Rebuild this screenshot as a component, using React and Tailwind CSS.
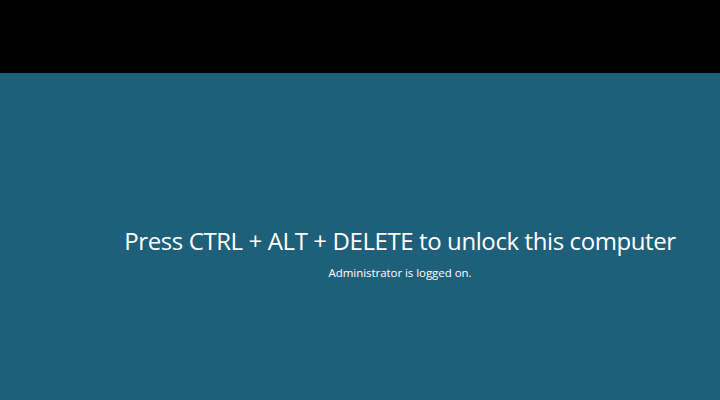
export default function App() {
  return (
    <div className="flex h-[400px] w-[720px] flex-col overflow-hidden bg-[#1e5f79] font-['Open_Sans',sans-serif] text-white">
      <div className="h-[73px] shrink-0 bg-black" />
      <div className="flex flex-1 flex-col items-center pl-[80px] pt-[152px]">
        <h1 className="text-[24px] leading-[32px] tracking-[-0.4px]">
          Press CTRL + ALT + DELETE to unlock this computer
        </h1>
        <p className="mt-[8px] text-[11.5px] leading-[16px] tracking-[-0.05px]">
          Administrator is logged on.
        </p>
      </div>
    </div>
  );
}
